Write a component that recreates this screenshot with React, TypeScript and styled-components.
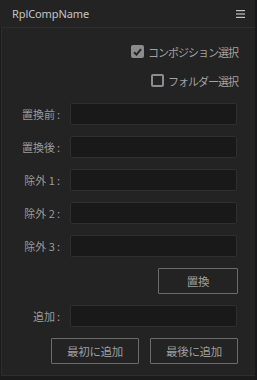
import React from "react";
import styled, { createGlobalStyle } from "styled-components";

const Global = createGlobalStyle`
  html, body { margin: 0; padding: 0; background: #1b1b1b; }
  * { box-sizing: border-box; }
`;

const Frame = styled.div`
  width: 257px;
  height: 380px;
  display: flex;
  background: #1b1b1b;
  overflow: hidden;
`;

const Main = styled.div`
  width: 255px;
  display: flex;
  flex-direction: column;
`;

const Edge = styled.div`
  width: 2px;
  background: #141920;
`;

const Header = styled.div`
  height: 27px;
  background: #232323;
  display: flex;
  align-items: center;
  justify-content: space-between;
  padding: 0 10px 0 12px;
`;

const Title = styled.span`
  font-family: "Noto Sans", "Liberation Sans", sans-serif;
  font-size: 11px;
  color: #c4c4c4;
  letter-spacing: -0.1px;
`;

const MenuIcon = styled.svg`
  width: 9px;
  height: 8px;
  display: block;
`;

const Panel = styled.div`
  height: 349px;
  margin-left: 1px;
  width: 254px;
  background: #232323;
  border: 1px solid #2e2e2e;
  border-right: none;
  padding: 12px 17px 0 0;
  display: flex;
  flex-direction: column;
  font-family: "Noto Sans CJK JP", "Noto Sans", sans-serif;
  font-size: 11px;
  color: #9a9a9a;
`;

const CheckRow = styled.label<{ $gap?: number }>`
  height: 23px;
  display: flex;
  align-items: center;
  justify-content: flex-end;
  gap: 4px;
  margin-bottom: ${(p) => p.$gap ?? 0}px;
  letter-spacing: -1px;
  color: #a2a2a2;
`;

const Box = styled.span<{ $checked?: boolean }>`
  width: 13px;
  height: 13px;
  border-radius: 2px;
  display: flex;
  align-items: center;
  justify-content: center;
  background: ${(p) => (p.$checked ? "#8c8c8c" : "transparent")};
  border: 2px solid #8c8c8c;
`;

const Field = styled.div`
  display: grid;
  grid-template-columns: 58px 167px;
  column-gap: 10px;
  align-items: center;
  height: 22px;
  margin-top: 11px;
`;

const Label = styled.span`
  text-align: right;
  white-space: nowrap;
  color: #9a9a9a;
`;

const Colon = styled.span`
  margin-left: 2px;
`;

const Input = styled.input`
  height: 22px;
  width: 167px;
  background: #191919;
  border: 1px solid #2f2f2f;
  border-radius: 2px;
  outline: none;
  color: #cccccc;
  padding: 0 4px;
`;

const ButtonRow = styled.div`
  display: flex;
  justify-content: flex-end;
  gap: 11px;
  margin-top: 11px;
`;

const Button = styled.button<{ $w: number }>`
  width: ${(p) => p.$w}px;
  height: 26px;
  background: transparent;
  border: 1px solid #6c6c6c;
  border-radius: 1px;
  color: #9e9e9e;
  font-family: "Noto Sans CJK JP", "Noto Sans", sans-serif;
  font-size: 11.5px;
  padding: 0;
  letter-spacing: -0.3px;
`;

const Bottom = styled.div`
  flex: 1;
  background: #1b1b1b;
`;

const Check = () => (
  <svg width="9" height="8" viewBox="0 0 9 8">
    <path d="M1 4.2 L3.5 6.6 L8 1.2" stroke="#262626" strokeWidth="2" fill="none" />
  </svg>
);

export default function App() {
  const fields = ["置換前", "置換後", "除外 1", "除外 2", "除外 3"];
  return (
    <>
      <Global />
      <Frame>
        <Main>
          <Header>
            <Title>RplCompName</Title>
            <MenuIcon viewBox="0 0 9 8">
              <rect x="0" y="0" width="9" height="1.2" fill="#c2c2c2" />
              <rect x="0" y="3.4" width="9" height="1.2" fill="#c2c2c2" />
              <rect x="0" y="6.8" width="9" height="1.2" fill="#c2c2c2" />
            </MenuIcon>
          </Header>
          <Panel>
            <CheckRow $gap={6}>
              <Box $checked>
                <Check />
              </Box>
              コンポジション選択
            </CheckRow>
            <CheckRow>
              <Box />
              フォルダー選択
            </CheckRow>
            {fields.map((f) => (
              <Field key={f}>
                <Label>
                  {f}
                  <Colon>:</Colon>
                </Label>
                <Input />
              </Field>
            ))}
            <ButtonRow>
              <Button $w={80}>置換</Button>
            </ButtonRow>
            <Field>
              <Label>
                追加<Colon>:</Colon>
              </Label>
              <Input />
            </Field>
            <ButtonRow>
              <Button $w={88}>最初に追加</Button>
              <Button $w={88}>最後に追加</Button>
            </ButtonRow>
          </Panel>
          <Bottom />
        </Main>
        <Edge />
      </Frame>
    </>
  );
}
